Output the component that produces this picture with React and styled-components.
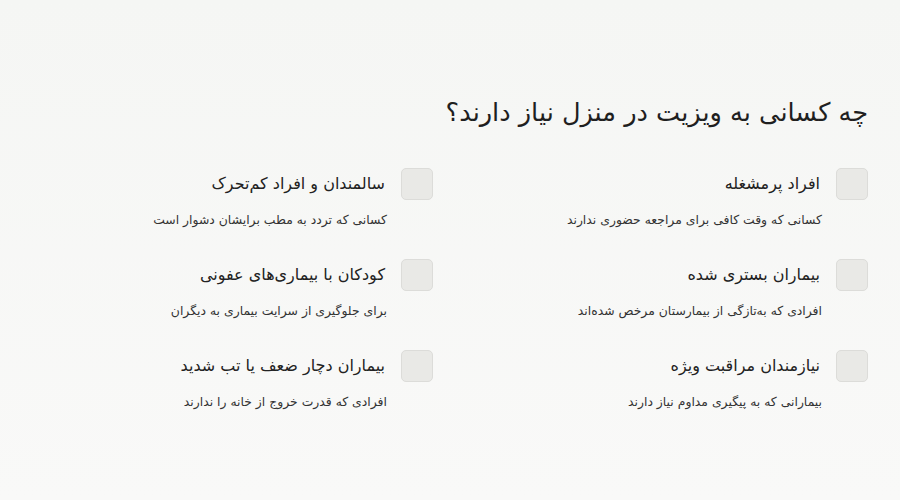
import React from "react";
import styled, { createGlobalStyle } from "styled-components";

const GlobalStyle = createGlobalStyle`
  * {
    box-sizing: border-box;
  }
  body {
    margin: 0;
    background: #f6f7f5;
    font-family: "DejaVu Sans", "Noto Sans", sans-serif;
    color: #222;
  }
`;

const Page = styled.div`
  width: 900px;
  height: 500px;
  direction: rtl;
  padding: 94px 32px 0 0;
  background: linear-gradient(180deg, #f5f6f4 0%, #f9f9f8 100%);
`;

const Heading = styled.h2`
  margin: 0 0 38px;
  font-size: 25.6px;
  font-weight: 400;
  line-height: 36px;
  color: #1f1f1f;
`;

const Grid = styled.div`
  display: grid;
  grid-template-columns: 435px 435px;
  row-gap: 29px;
`;

const Item = styled.div`
  display: flex;
  flex-direction: column;
`;

const Head = styled.div`
  display: flex;
  align-items: center;
  gap: 16px;
`;

const Box = styled.span`
  width: 32px;
  height: 32px;
  flex: none;
  border-radius: 5px;
  background: #e9e9e6;
  border: 1px solid #dcdcd9;
`;

const Title = styled.h3`
  margin: 0;
  font-size: 16px;
  font-weight: 400;
  line-height: 24px;
  color: #222;
`;

const Desc = styled.p`
  margin: 10px 46px 0 0;
  font-size: 12.4px;
  line-height: 20px;
  color: #333;
`;

const items = [
  { title: "افراد پرمشغله", desc: "کسانی که وقت کافی برای مراجعه حضوری ندارند" },
  { title: "سالمندان و افراد کم‌تحرک", desc: "کسانی که تردد به مطب برایشان دشوار است" },
  { title: "بیماران بستری شده", desc: "افرادی که به‌تازگی از بیمارستان مرخص شده‌اند" },
  { title: "کودکان با بیماری‌های عفونی", desc: "برای جلوگیری از سرایت بیماری به دیگران" },
  { title: "نیازمندان مراقبت ویژه", desc: "بیمارانی که به پیگیری مداوم نیاز دارند" },
  { title: "بیماران دچار ضعف یا تب شدید", desc: "افرادی که قدرت خروج از خانه را ندارند" },
];

const App = () => {
  return (
    <>
      <GlobalStyle />
      <Page>
        <Heading>چه کسانی به ویزیت در منزل نیاز دارند؟</Heading>
        <Grid>
          {items.map((e) => (
            <Item key={e.title}>
              <Head>
                <Box />
                <Title>{e.title}</Title>
              </Head>
              <Desc>{e.desc}</Desc>
            </Item>
          ))}
        </Grid>
      </Page>
    </>
  );
};

export default App;
